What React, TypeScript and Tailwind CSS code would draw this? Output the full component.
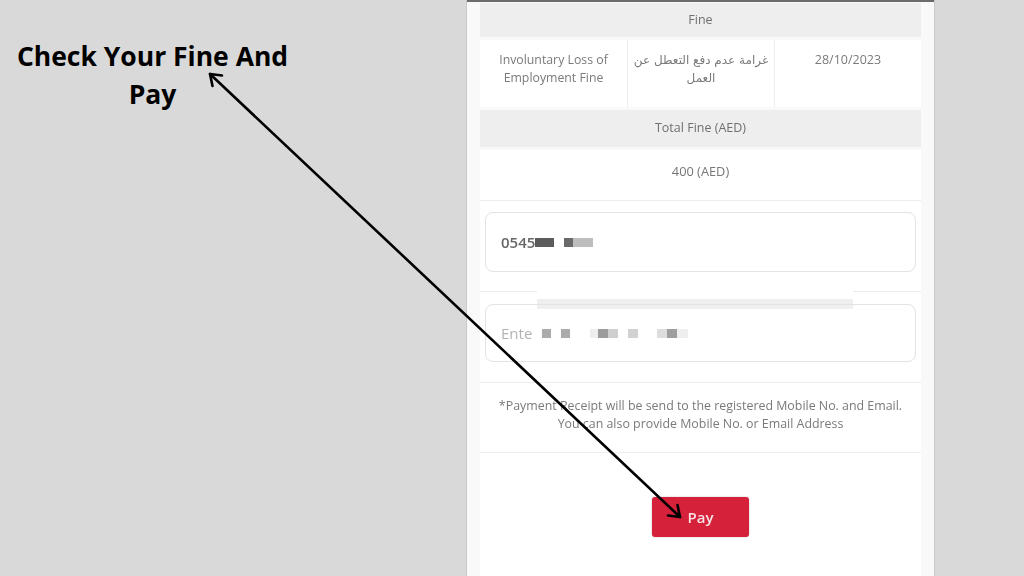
import React from "react";

const sans = { fontFamily: '"Open Sans", "Noto Sans", sans-serif' };
const arabic = { fontFamily: '"DejaVu Sans", "Noto Sans", sans-serif' };

function Sq({ w, c, ml = 0 }: { w: number; c: string; ml?: number }) {
  return <span className="inline-block h-[9px]" style={{ width: w, background: c, marginLeft: ml }} />;
}

export default function App() {
  return (
    <div className="relative w-[1024px] h-[576px] bg-[#d9d9d9] flex overflow-hidden" style={sans}>
      <div className="w-[305px] shrink-0 pt-[37px] text-center font-bold text-[26.5px] leading-[38px] text-black">
        Check Your Fine And
        <br />
        Pay
      </div>
      <div className="w-[161px] shrink-0" />
      <div className="relative w-[469px] shrink-0 h-full border-x border-[#c9c9c9] bg-[#f9f9f9] flex flex-col blur-[0.45px]">
        <div className="h-[2px] bg-[#6b6b6b]" />
        <div className="px-[13px] pt-[1px] flex flex-col flex-1">
          <div className="h-[34px] bg-[#eeeeee] flex items-center justify-center text-[12.5px] text-[#707070]">Fine</div>
          <div className="mt-[3px] h-[67px] bg-white grid grid-cols-3 text-[12.3px] leading-[18px] text-[#7a7a7a] text-center">
            <div className="pt-[11px]">
              Involuntary Loss of
              <br />
              Employment Fine
            </div>
            <div className="pt-[11px] text-[12px] border-l border-[#ededed]" style={arabic}>
              <div dir="rtl">
                غرامة عدم دفع التعطل عن
                <br />
                العمل
              </div>
            </div>
            <div className="pt-[11px] text-[12.5px] border-l border-[#ededed]">28/10/2023</div>
          </div>
          <div className="mt-[3px] h-[37px] bg-[#eeeeee] flex items-center justify-center text-[12.5px] text-[#707070]">Total Fine (AED)</div>
          <div className="mt-[3px] h-[51px] bg-white border-b border-[#ececec] pt-[12px] text-center text-[12.8px] leading-[18px] text-[#777777]">400 (AED)</div>
          <div className="bg-white flex-1 flex flex-col">
            <div className="px-[5px] pt-[11px] pb-[19px] border-b border-[#ececec]">
              <div className="relative z-20 h-[60px] rounded-[8px] border border-[#e3e3e3] flex items-center pl-[15px] text-[15px] font-semibold text-[#676767]">
                <span>0545</span>
                <Sq w={19} c="#5c5c5c" />
                <Sq w={9} c="#6a6a6a" ml={10} />
                <Sq w={20} c="#bdbdbd" />
              </div>
            </div>
            <div className="px-[5px] pt-[12px] pb-[20px] border-b border-[#ececec]">
              <div className="relative z-20 h-[58px] rounded-[8px] border border-[#e3e3e3] flex items-center pl-[15px] text-[15px] text-[#b3b3b3]">
                <span>Ente</span>
                <Sq w={9} c="#ababab" ml={10} />
                <Sq w={9} c="#ababab" ml={10} />
                <Sq w={8} c="#eeeeee" ml={20} />
                <Sq w={10} c="#9c9c9c" />
                <Sq w={10} c="#cfcfcf" />
                <Sq w={10} c="#d2d2d2" ml={10} />
                <Sq w={10} c="#dddddd" ml={19} />
                <Sq w={10} c="#9e9e9e" />
                <Sq w={11} c="#efefef" />
              </div>
            </div>
            <div className="h-[70px] border-b border-[#efefef] pt-[14px] text-center text-[12.4px] leading-[18px] text-[#7a7a7a]">
              *Payment Receipt will be send to the registered Mobile No. and Email.
              <br />
              You can also provide Mobile No. or Email Address
            </div>
            <div className="flex justify-center pt-[44px]">
              <div className="w-[97px] h-[40px] rounded-[3px] bg-[#d6213b] flex items-center justify-center text-[15px] font-semibold text-[#f6e3e6] shadow-[0_0_2px_rgba(0,0,0,0.25)]">
                Pay
              </div>
            </div>
          </div>
        </div>
        <div className="absolute left-[70px] top-[267px] w-[316px] h-[99px] bg-white z-10">
          <div className="mt-[32px] h-[10px] bg-[#efefef]" />
        </div>
      </div>
      <svg className="absolute inset-0 pointer-events-none" width="1024" height="576" viewBox="0 0 1024 576">
        <g stroke="#000" strokeWidth="2.6" fill="none" strokeLinecap="round" strokeLinejoin="round">
          <line x1="210" y1="74" x2="680" y2="517" />
          <polyline points="212.5,86 210,74 222,75.5" />
          <polyline points="677.5,505 680,517 668,515.5" />
        </g>
      </svg>
    </div>
  );
}
